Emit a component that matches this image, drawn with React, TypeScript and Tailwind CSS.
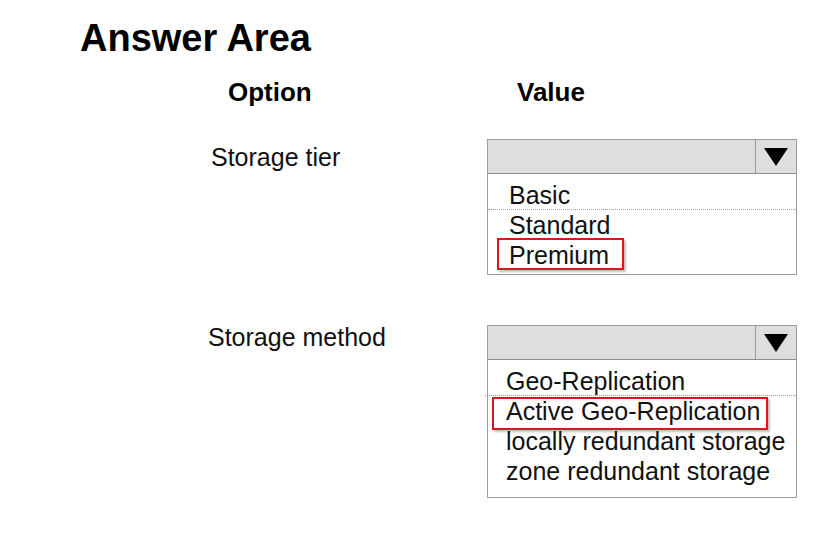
import React from 'react';

type Item = { label: string; marked?: boolean };

const ROWS: {
  option: string;
  items: Item[];
  top: string;
  label: string;
  pad: string;
  mark: string;
}[] = [
  {
    option: 'Storage tier',
    items: [{ label: 'Basic' }, { label: 'Standard' }, { label: 'Premium', marked: true }],
    top: 'mt-[34px]',
    label: 'pl-[211px] pt-[6px]',
    pad: 'pl-[21px] pt-[6px] pb-[4px]',
    mark: '-left-[12px] top-[-2px] w-[127px] h-[32px]',
  },
  {
    option: 'Storage method',
    items: [
      { label: 'Geo-Replication' },
      { label: 'Active Geo-Replication', marked: true },
      { label: 'locally redundant storage' },
      { label: 'zone redundant storage' },
    ],
    top: 'mt-[50px]',
    label: 'pl-[208px] pt-[0px]',
    pad: 'pl-[18px] pt-[6px] pb-[11px]',
    mark: '-left-[14px] top-[1px] w-[276px] h-[33px]',
  },
];

function Dropdown({ items, pad, mark }: { items: Item[]; pad: string; mark: string }) {
  return (
    <div className="w-[310px] border border-[#9c9c9c] bg-white">
      {/* Closed select header */}
      <div className="flex h-[34px] bg-[#dedede] border-b border-[#8e8e8e]">
        <div className="flex-1" />
        <div className="w-[41px] border-l border-[#9a9a9a] flex items-center justify-center">
          <svg width="24" height="18" viewBox="0 0 24 18">
            <polygon points="0,0 24,0 12,18" fill="#000" />
          </svg>
        </div>
      </div>

      {/* Options list */}
      <div className={pad}>
        {items.map((it, i) => (
          <div
            key={it.label}
            className={`h-[30px] leading-[30px] text-[25px] text-[#111] ${
              i === 0 ? '-ml-[21px] pl-[21px] border-b border-dotted border-[#9a9a9a]' : ''
            }`}
          >
            <span className="relative inline-block">
              {it.marked && (
                <span
                  className={`absolute ${mark} border-2 border-[#e0141b] shadow-[2px_2px_2px_rgba(0,0,0,0.25)]`}
                />
              )}
              {it.label}
            </span>
          </div>
        ))}
      </div>
    </div>
  );
}

export default function App() {
  return (
    <div className="w-[840px] h-[536px] bg-white text-black font-['Liberation_Sans',Arial,sans-serif] overflow-hidden">
      <h1 className="pt-[19px] pl-[80px] text-[38px] leading-[38px] font-bold">Answer Area</h1>

      <div className="flex mt-[22px] text-[26px] leading-[26px] font-bold">
        <div className="pl-[228px] w-[517px]">Option</div>
        <div>Value</div>
      </div>

      {ROWS.map((row) => (
        <div key={row.option} className={`flex ${row.top}`}>
          <div className={`w-[487px] ${row.label} text-[25px] leading-[25px] text-[#111]`}>
            {row.option}
          </div>
          <Dropdown items={row.items} pad={row.pad} mark={row.mark} />
        </div>
      ))}
    </div>
  );
}
